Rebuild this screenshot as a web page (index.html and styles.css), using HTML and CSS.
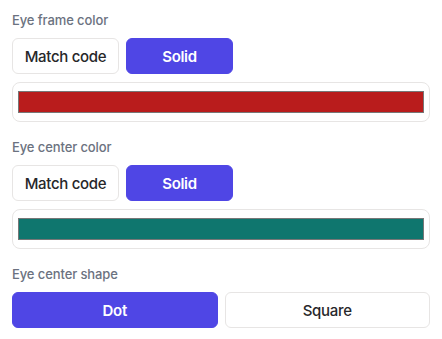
FILE: index.html
```html
<!DOCTYPE html>
<html lang="en">
<head>
<meta charset="UTF-8" />
<meta name="viewport" content="width=device-width, initial-scale=1" />
<title>Eye options</title>
<link rel="stylesheet" href="styles.css">
</head>
<body>

<div class="panel">
  <div class="field">
    <div class="label">Eye frame color</div>
    <div class="choices">
      <button class="choice">Match code</button>
      <button class="choice active">Solid</button>
    </div>
    <div class="color-box">
      <div class="swatch red"></div>
    </div>
  </div>

  <div class="field">
    <div class="label">Eye center color</div>
    <div class="choices">
      <button class="choice">Match code</button>
      <button class="choice active">Solid</button>
    </div>
    <div class="color-box">
      <div class="swatch teal"></div>
    </div>
  </div>

  <div class="field">
    <div class="label">Eye center shape</div>
    <div class="choices wide">
      <button class="choice active">Dot</button>
      <button class="choice">Square</button>
    </div>
  </div>
</div>

</body>
</html>
```

FILE: styles.css
```css
body {
  margin: 0;
  background: #ffffff;
  font-family: Inter, 'Noto Sans', sans-serif;
  color: #27272a;
}
.panel {
  padding: 12px 12px 0;
}
.field {
  margin-bottom: 17px;
}
.label {
  font-size: 13px;
  line-height: 16px;
  font-weight: 500;
  letter-spacing: -0.1px;
  color: #6b7280;
  margin-bottom: 10px;
}
.choices {
  display: flex;
  gap: 7px;
}
.choice {
  width: 107px;
  height: 36px;
  border: 1px solid #e7e5e4;
  border-radius: 6px;
  background: #ffffff;
  color: #27272a;
  font-family: inherit;
  font-size: 15px;
  font-weight: 500;
  letter-spacing: -0.3px;
  cursor: pointer;
  padding: 0;
}
.choice.active {
  background: #4f46e5;
  border-color: #4f46e5;
  color: #ffffff;
  font-weight: 600;
}
.choices.wide .choice {
  flex: 1;
}
.color-box {
  margin-top: 8px;
  border: 1px solid #e7e5e4;
  border-radius: 8px;
  padding: 8px 5px;
}
.swatch {
  height: 22px;
  box-sizing: border-box;
  border: 1px solid #777777;
}
.swatch.red {
  background: #b91c1c;
}
.swatch.teal {
  background: #0f766e;
}
```
